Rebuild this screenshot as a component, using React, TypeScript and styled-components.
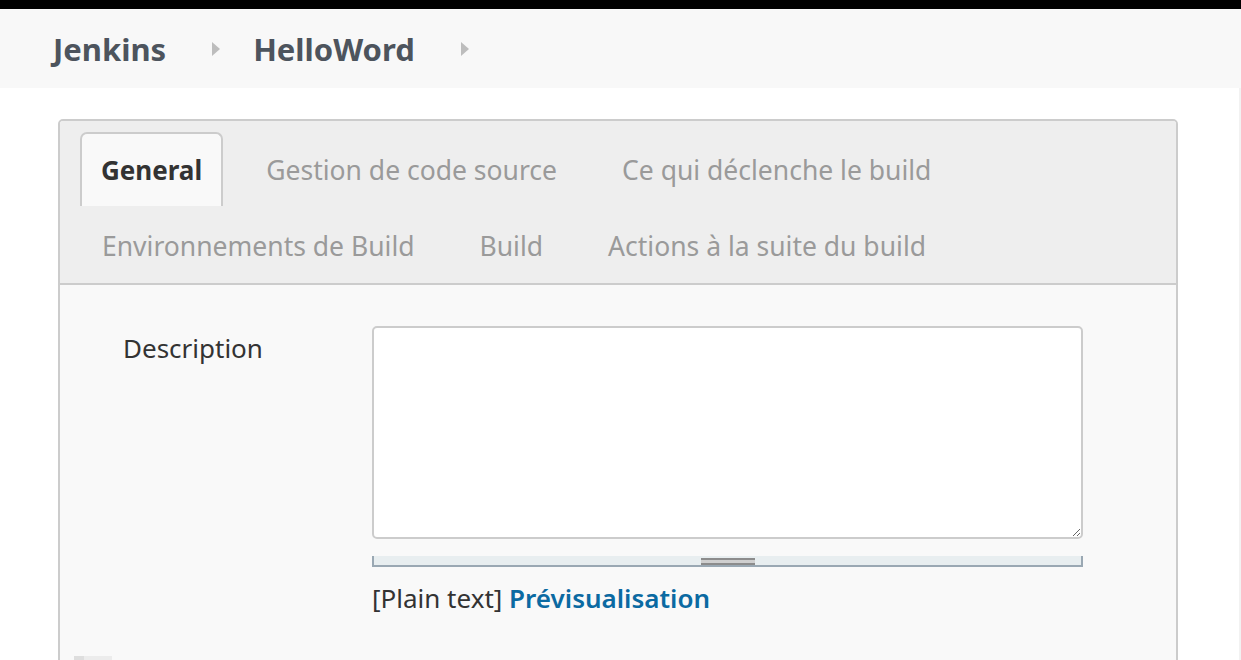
import React from "react";
import styled, { createGlobalStyle } from "styled-components";

const Global = createGlobalStyle`
  html, body { margin: 0; padding: 0; background: #fff; }
  body { font-family: "Noto Sans", "Open Sans", sans-serif; overflow: hidden; }
  * { box-sizing: border-box; }
`;

const Page = styled.div`
  width: 1241px;
  height: 660px;
  overflow: hidden;
  display: flex;
  flex-direction: column;
  background: #fff;
  position: relative;
`;

const TopBar = styled.div`
  height: 9px;
  background: #000;
  flex: none;
`;

const Header = styled.header`
  height: 79px;
  flex: none;
  background: #f8f8f8;
  display: flex;
  align-items: center;
  padding-left: 53px;
`;

const Crumb = styled.a`
  font-size: 31px;
  font-weight: 700;
  color: #4d545d;
  text-decoration: none;
`;

const Chevron = styled.span<{ $after?: number }>`
  display: inline-block;
  width: 0;
  height: 0;
  border-top: 7px solid transparent;
  border-bottom: 7px solid transparent;
  border-left: 8px solid #bdbdbd;
  margin: 0 ${(p) => p.$after ?? 32}px 0 46px;
`;

const Main = styled.main`
  flex: 1;
  padding: 31px 63px 0 58px;
`;

const Card = styled.section`
  border: 2px solid #ccc;
  border-radius: 5px;
  background: #f9f9f9;
  height: 560px;
  overflow: hidden;
`;

const TabBar = styled.nav`
  background: #eee;
  border-bottom: 2px solid #ccc;
  padding: 11px 20px 0;
  display: flex;
  flex-direction: column;
`;

const TabRow = styled.div<{ $h: number }>`
  display: flex;
  gap: 21px;
  height: ${(p) => p.$h}px;
  align-items: stretch;
`;

const Tab = styled.div<{ $active?: boolean }>`
  display: flex;
  align-items: center;
  padding: 0 ${(p) => (p.$active ? 19 : 20)}px;
  font-size: ${(p) => (p.$active ? 26 : 26.5)}px;
  font-weight: ${(p) => (p.$active ? 700 : 400)};
  color: ${(p) => (p.$active ? "#333" : "#9a9a9a")};
  background: ${(p) => (p.$active ? "#f9f9f9" : "transparent")};
  border: 2px solid ${(p) => (p.$active ? "#ccc" : "transparent")};
  border-bottom: none;
  border-radius: 7px 7px 0 0;
  white-space: nowrap;
`;

const Content = styled.div`
  padding: 41px 0 0 63px;
`;

const FieldRow = styled.div`
  display: grid;
  grid-template-columns: 249px 711px;
`;

const Label = styled.label`
  font-size: 26px;
  color: #333;
  padding-top: 5px;
  line-height: 34px;
`;

const FieldCol = styled.div`
  display: flex;
  flex-direction: column;
`;

const TextArea = styled.textarea`
  width: 711px;
  height: 213px;
  background: #fff;
  border: 2px solid #ccc;
  border-radius: 5px;
  resize: vertical;
  font: inherit;
  outline: none;
`;

const Grip = styled.div`
  margin-top: 17px;
  height: 11px;
  background: #e8eef0;
  border: 2px solid #9aa8b3;
  border-top: none;
  display: flex;
  justify-content: center;
`;

const GripHandle = styled.div`
  width: 54px;
  height: 7px;
  margin-top: 2px;
  border-top: 2px solid #8c8c8c;
  border-bottom: 2px solid #8c8c8c;
  background: #cfcfcf;
`;

const Preview = styled.div`
  margin-top: 13px;
  font-size: 26px;
  color: #333;
`;

const PreviewLink = styled.a`
  color: #0b6aa2;
  font-weight: 600;
  text-decoration: none;
`;

const Footer = styled.div`
  margin: 40px 0 0 14px;
  display: flex;
`;

const Stub = styled.div<{ $w: number; $c: string }>`
  width: ${(p) => p.$w}px;
  height: 10px;
  background: ${(p) => p.$c};
`;

const EdgeLine = styled.div`
  position: absolute;
  right: 0;
  top: 88px;
  bottom: 0;
  width: 2px;
  background: #f2f2f2;
`;

export default function App() {
  return (
    <>
      <Global />
      <Page>
        <TopBar />
        <Header>
          <Crumb>Jenkins</Crumb>
          <Chevron $after={33} />
          <Crumb>HelloWord</Crumb>
          <Chevron />
        </Header>
        <Main>
          <Card>
            <TabBar>
              <TabRow $h={74}>
                <Tab $active>General</Tab>
                <Tab>Gestion de code source</Tab>
                <Tab>Ce qui déclenche le build</Tab>
              </TabRow>
              <TabRow $h={77}>
                <Tab>Environnements de Build</Tab>
                <Tab>Build</Tab>
                <Tab>Actions à la suite du build</Tab>
              </TabRow>
            </TabBar>
            <Content>
              <FieldRow>
                <Label>Description</Label>
                <FieldCol>
                  <TextArea />
                  <Grip>
                    <GripHandle />
                  </Grip>
                  <Preview>
                    [Plain text] <PreviewLink>Prévisualisation</PreviewLink>
                  </Preview>
                </FieldCol>
              </FieldRow>
            </Content>
            <Footer>
              <Stub $w={10} $c="#dedede" />
              <Stub $w={28} $c="#ececec" />
            </Footer>
          </Card>
        </Main>
        <EdgeLine />
      </Page>
    </>
  );
}
